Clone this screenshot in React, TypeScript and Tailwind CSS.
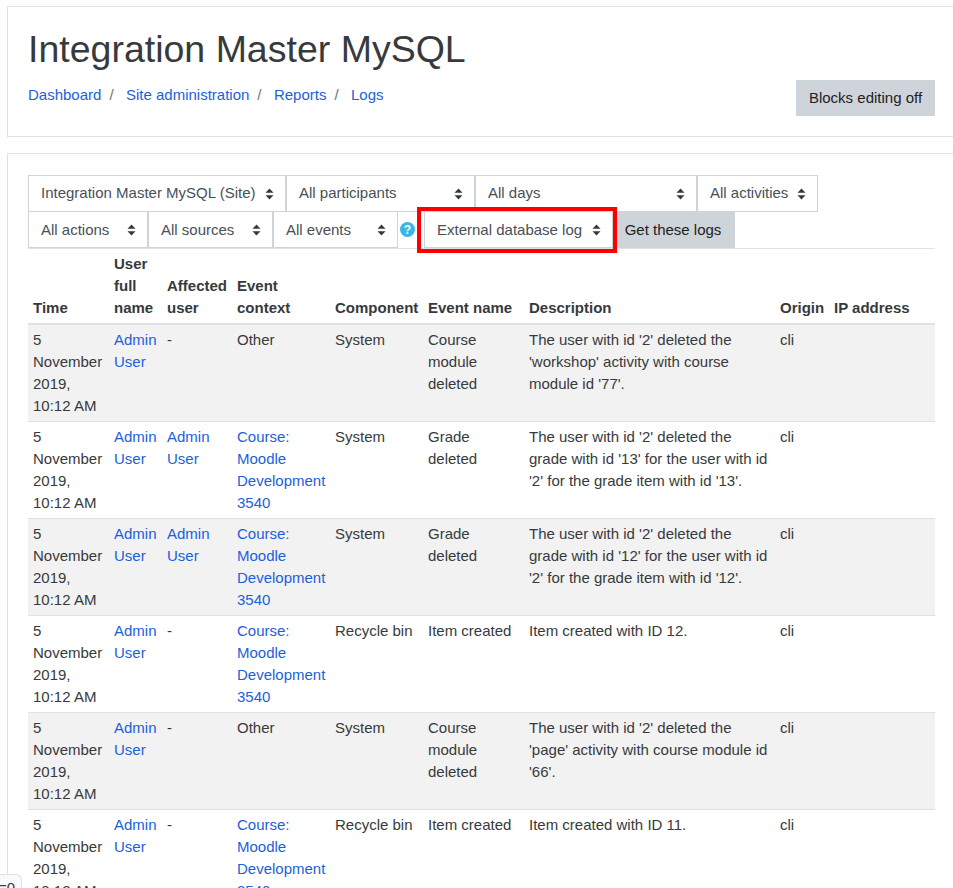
import React from 'react';

type Row = {
    origin: string;
    affected: string;
    context: string[];
    contextLink: boolean;
    component: string;
    event: string[];
    description: string[];
};

const rows: Row[] = [
    {
        origin: 'cli',
        affected: '-',
        context: ['Other'],
        contextLink: false,
        component: 'System',
        event: ['Course', 'module', 'deleted'],
        description: ["The user with id '2' deleted the", "'workshop' activity with course", "module id '77'."],
    },
    {
        origin: 'cli',
        affected: 'Admin User',
        context: ['Course:', 'Moodle', 'Development', '3540'],
        contextLink: true,
        component: 'System',
        event: ['Grade', 'deleted'],
        description: ["The user with id '2' deleted the", "grade with id '13' for the user with id", "'2' for the grade item with id '13'."],
    },
    {
        origin: 'cli',
        affected: 'Admin User',
        context: ['Course:', 'Moodle', 'Development', '3540'],
        contextLink: true,
        component: 'System',
        event: ['Grade', 'deleted'],
        description: ["The user with id '2' deleted the", "grade with id '12' for the user with id", "'2' for the grade item with id '12'."],
    },
    {
        origin: 'cli',
        affected: '-',
        context: ['Course:', 'Moodle', 'Development', '3540'],
        contextLink: true,
        component: 'Recycle bin',
        event: ['Item created'],
        description: ['Item created with ID 12.'],
    },
    {
        origin: 'cli',
        affected: '-',
        context: ['Other'],
        contextLink: false,
        component: 'System',
        event: ['Course', 'module', 'deleted'],
        description: ["The user with id '2' deleted the", "'page' activity with course module id", "'66'."],
    },
    {
        origin: 'cli',
        affected: '-',
        context: ['Course:', 'Moodle', 'Development', '3540'],
        contextLink: true,
        component: 'Recycle bin',
        event: ['Item created'],
        description: ['Item created with ID 11.'],
    },
];

function Lines({ lines }: { lines: string[] }) {
    return (
        <>
            {lines.map((line) => (
                <div key={line} className="whitespace-nowrap">{line}</div>
            ))}
        </>
    );
}

function Select({ label, width, top }: { label: string; width: string; top?: boolean }) {
    return (
        <div className={`${width} h-[37px] flex items-center justify-between pl-3 pr-[11px] bg-white border border-[#ced4da] text-[#495057] whitespace-nowrap shrink-0`}>
            <span className={top ? 'pb-[2px]' : ''}>{label}</span>
            <svg width="9" height="14" viewBox="0 0 9 14" className="shrink-0">
                <path d="M4.5 1.5 L8.5 5.7 H0.5 Z M4.5 12.5 L8.5 8.3 H0.5 Z" fill="#343a40" />
            </svg>
        </div>
    );
}

export default function App() {
    return (
        <div className="w-[953px] h-[888px] overflow-hidden relative bg-white text-[15px] leading-[22px] text-[#373a3c] font-['Liberation_Sans',Arial,sans-serif]">
            <div className="pl-[7px] pt-[6px]">
                <div className="w-[949px] h-[131px] border border-[#dee2e6] px-5 pt-5 flex flex-col">
                    <h1 className="text-[37.5px] leading-[44px] font-normal">Integration Master MySQL</h1>
                    <div className="flex justify-between mt-[3px]">
                        <nav className="flex pt-[10px] h-[32px]">
                            <a className="text-[#1c5fdc]">Dashboard</a>
                            <span className="text-[#6c757d] pl-2 pr-[12.4px]">/</span>
                            <a className="text-[#1c5fdc]">Site administration</a>
                            <span className="text-[#6c757d] pl-2 pr-[12.4px]">/</span>
                            <a className="text-[#1c5fdc]">Reports</a>
                            <span className="text-[#6c757d] pl-2 pr-[12.4px]">/</span>
                            <a className="text-[#1c5fdc]">Logs</a>
                        </nav>
                        <button className="mt-[6px] h-9 w-[139px] bg-[#ced4da] text-[#1d2125]">Blocks editing off</button>
                    </div>
                </div>

                <div className="w-[949px] mt-4 border border-[#dee2e6] px-5 pt-[21px]">
                    <div className="flex">
                        <Select top label="Integration Master MySQL (Site)" width="w-[258px]" />
                        <Select top label="All participants" width="w-[189px]" />
                        <Select top label="All days" width="w-[222px]" />
                        <Select top label="All activities" width="w-[121px]" />
                    </div>
                    <div className="flex items-center -mt-px">
                        <Select label="All actions" width="w-[120px]" />
                        <Select label="All sources" width="w-[125px]" />
                        <Select label="All events" width="w-[125px]" />
                        <svg width="15" height="15" viewBox="0 0 15 15" className="ml-[2px] shrink-0">
                            <circle cx="7.5" cy="7.5" r="7.5" fill="#3bb5e3" />
                            <text x="7.5" y="11.8" textAnchor="middle" fontSize="12" fontWeight="700" fill="#fff" fontFamily="Liberation Sans">?</text>
                        </svg>
                        <div className="relative ml-[9px] shrink-0">
                            <Select label="External database log" width="w-[189px]" />
                            <div className="absolute -left-[7px] -right-[4px] -top-[4px] -bottom-[5px] border-4 border-[#ff0000] pointer-events-none" />
                        </div>
                        <button className="h-[37px] w-[122px] pr-[2px] bg-[#ced4da] text-[#1d2125] shrink-0">Get these logs</button>
                    </div>

                    <table className="w-[907px] table-fixed border-collapse">
                        <colgroup>
                            <col className="w-[81px]" />
                            <col className="w-[53px]" />
                            <col className="w-[70px]" />
                            <col className="w-[98px]" />
                            <col className="w-[93px]" />
                            <col className="w-[101px]" />
                            <col className="w-[251px]" />
                            <col className="w-[54px]" />
                            <col className="w-[106px]" />
                        </colgroup>
                        <thead>
                            <tr className="border-t border-[#dee2e6] border-b-2 border-b-[#dee2e6]">
                                <th className="px-[5px] py-1 text-left align-bottom font-bold">Time</th>
                                <th className="px-[5px] py-1 text-left align-bottom font-bold">User<br />full<br />name</th>
                                <th className="px-[5px] py-1 text-left align-bottom font-bold">Affected<br />user</th>
                                <th className="px-[5px] py-1 text-left align-bottom font-bold">Event<br />context</th>
                                <th className="px-[5px] py-1 text-left align-bottom font-bold">Component</th>
                                <th className="px-[5px] py-1 text-left align-bottom font-bold">Event name</th>
                                <th className="px-[5px] py-1 text-left align-bottom font-bold">Description</th>
                                <th className="px-[5px] py-1 text-left align-bottom font-bold">Origin</th>
                                <th className="px-[5px] py-1 text-left align-bottom font-bold whitespace-nowrap">IP address</th>
                            </tr>
                        </thead>
                        <tbody>
                            {rows.map((row, i) => (
                                <tr key={i} className={i % 2 === 0 ? 'bg-[#f2f2f2] border-t border-[#dee2e6]' : 'border-t border-[#dee2e6]'}>
                                    <td className="px-[5px] py-1 align-top"><Lines lines={['5', 'November', '2019,', '10:12 AM']} /></td>
                                    <td className="px-[5px] py-1 align-top text-[#1c5fdc]"><Lines lines={['Admin', 'User']} /></td>
                                    <td className={row.affected === '-' ? 'px-[5px] py-1 align-top' : 'px-[5px] py-1 align-top text-[#1c5fdc]'}>
                                        {row.affected === '-' ? '-' : <Lines lines={['Admin', 'User']} />}
                                    </td>
                                    <td className={row.contextLink ? 'px-[5px] py-1 align-top text-[#1c5fdc]' : 'px-[5px] py-1 align-top'}><Lines lines={row.context} /></td>
                                    <td className="px-[5px] py-1 align-top whitespace-nowrap">{row.component}</td>
                                    <td className="px-[5px] py-1 align-top"><Lines lines={row.event} /></td>
                                    <td className="px-[5px] py-1 align-top"><Lines lines={row.description} /></td>
                                    <td className="px-[5px] py-1 align-top">{row.origin}</td>
                                    <td className="px-[5px] py-1 align-top"></td>
                                </tr>
                            ))}
                        </tbody>
                    </table>
                </div>
            </div>
            <div className="absolute left-0 bottom-0 w-[22px] h-[14px] bg-[#f8f9fa] border-t border-r border-[#dee2e6] rounded-tr-md overflow-hidden flex justify-end pr-[6px] pt-[2px] whitespace-nowrap leading-[22px]">=0</div>
        </div>
    );
}
